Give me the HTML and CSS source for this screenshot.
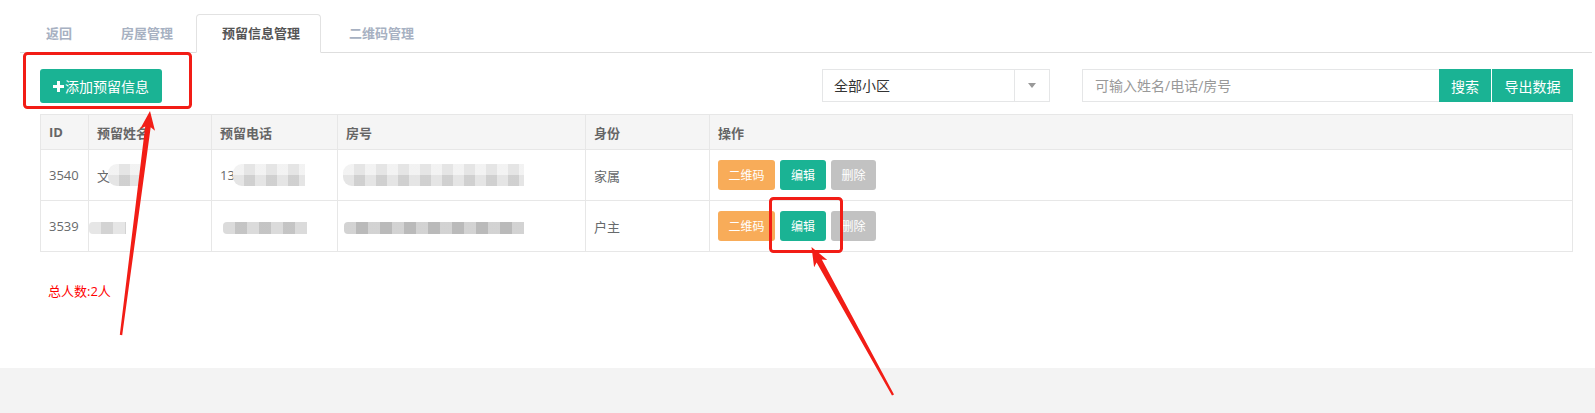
FILE: index.html
```html
<!DOCTYPE html>
<html lang="zh-CN">
<head>
    <meta charset="UTF-8">
    <title>预留信息管理</title>
    <link rel="stylesheet" href="styles.css">
</head>
<body>

<div class="page">
    <!-- tabs -->
    <ul class="tabs">
        <li><a href="#">返回</a></li>
        <li><a href="#">房屋管理</a></li>
        <li class="active"><a href="#">预留信息管理</a></li>
        <li><a href="#">二维码管理</a></li>
    </ul>

    <div class="panel">
        <div class="toolbar">
            <button class="btn btn-add" type="button">
                <svg class="plus" width="11" height="11" viewBox="0 0 11 11"><path d="M4 0h3v4h4v3H7v4H4V7H0V4h4z" fill="#fff"/></svg>添加预留信息
            </button>
            <div class="filters">
                <div class="select">
                    <span class="select-text">全部小区</span>
                    <span class="select-arrow"><i></i></span>
                </div>
                <div class="search">
                    <input type="text" placeholder="可输入姓名/电话/房号">
                    <button class="btn btn-search" type="button">搜索</button>
                    <button class="btn btn-export" type="button">导出数据</button>
                </div>
            </div>
        </div>

        <table class="grid">
            <thead>
                <tr>
                    <th class="c-id">ID</th>
                    <th class="c-name">预留姓名</th>
                    <th class="c-phone">预留电话</th>
                    <th class="c-room">房号</th>
                    <th class="c-role">身份</th>
                    <th>操作</th>
                </tr>
            </thead>
            <tbody>
                <tr>
                    <td>3540</td>
                    <td><span class="cut">文</span><span class="blur blur-name"></span></td>
                    <td><span class="cut">13</span><span class="blur blur-phone"></span></td>
                    <td><span class="blur blur-room"></span></td>
                    <td>家属</td>
                    <td class="ops">
                        <button class="btn btn-sm btn-qr" type="button">二维码</button>
                        <button class="btn btn-sm btn-edit" type="button">编辑</button>
                        <button class="btn btn-sm btn-del" type="button">删除</button>
                    </td>
                </tr>
                <tr>
                    <td>3539</td>
                    <td><span class="blur blur-thin blur-name2"></span></td>
                    <td><span class="blur blur-thin blur-phone2"></span></td>
                    <td><span class="blur blur-thin blur-room2"></span></td>
                    <td>户主</td>
                    <td class="ops">
                        <button class="btn btn-sm btn-qr" type="button">二维码</button>
                        <button class="btn btn-sm btn-edit" type="button">编辑</button>
                        <button class="btn btn-sm btn-del" type="button">删除</button>
                    </td>
                </tr>
            </tbody>
        </table>

        <p class="total">总人数:2人</p>
    </div>
</div>

<!-- screenshot annotations -->
<svg class="marks" width="1595" height="413" viewBox="0 0 1595 413">
    <rect x="24.5" y="53.5" width="166" height="54" rx="3" fill="none" stroke="#f21d16" stroke-width="3"/>
    <rect x="770.5" y="198.5" width="71" height="53" rx="3" fill="none" stroke="#f21d16" stroke-width="3"/>
    <polygon fill="#f21d16" points="119.8,334.8 145.2,126.5 140.1,128.9 150,111 155.0,130.8 150.7,127.3 122.2,335.2"/>
    <polygon fill="#f21d16" points="892.0,395.6 816.6,262.5 814.1,267.2 811.5,247 827.3,260.0 821.8,259.6 894.0,394.4"/>
</svg>

</body>
</html>
```

FILE: styles.css
```css
body {
    margin: 0;
    background: #f3f3f3;
    font-family: "Open Sans", "Noto Sans CJK SC", sans-serif;
    font-size: 13px;
    color: #676a6c;
}

.page {
    background: #fff;
    height: 368px;
    padding-top: 14px;
    box-sizing: border-box;
}

/* tabs */
.tabs {
    list-style: none;
    margin: 0 3px 0 20px;
    padding: 0;
    display: flex;
    border-bottom: 1px solid #dedede;
}

.tabs li {
    margin-bottom: -1px;
}

.tabs a {
    display: block;
    padding: 10px 20px 10px 25px;
    margin-right: 2px;
    line-height: 17px;
    font-size: 13px;
    font-weight: 600;
    color: #a7b1c2;
    text-decoration: none;
    border: 1px solid transparent;
    border-radius: 4px 4px 0 0;
}

.tabs .active a {
    color: #555;
    background: #fff;
    border-color: #e2e2e2 #e2e2e2 #fff;
}

/* panel */
.panel {
    padding: 16px 22px 0 40px;
}

.toolbar {
    display: flex;
    justify-content: space-between;
    align-items: flex-start;
}

.btn {
    border: none;
    color: #fff;
    font-family: inherit;
    font-size: 14px;
    cursor: pointer;
    padding: 0;
}

.btn-add {
    height: 34px;
    padding: 0 13px;
    background: #1ab394;
    border-radius: 3px;
    display: flex;
    align-items: center;
}

.btn-add .plus {
    margin-right: 1px;
}

.filters {
    display: flex;
    gap: 32px;
}

.select {
    width: 228px;
    height: 33px;
    border: 1px solid #e5e6e7;
    box-sizing: border-box;
    display: flex;
}

.select-text {
    flex: 1;
    padding-left: 11px;
    line-height: 31px;
    font-size: 14px;
    color: #333;
}

.select-arrow {
    width: 34px;
    border-left: 1px solid #e5e6e7;
    display: flex;
    align-items: center;
    justify-content: center;
}

.select-arrow i {
    width: 0;
    height: 0;
    border-left: 4px solid transparent;
    border-right: 4px solid transparent;
    border-top: 5px solid #999;
}

.search {
    display: flex;
    height: 33px;
}

.search input {
    width: 357px;
    height: 33px;
    box-sizing: border-box;
    border: 1px solid #e5e6e7;
    border-right: none;
    padding: 0 12px;
    font-family: inherit;
    font-size: 14px;
    outline: none;
}

.search input::placeholder {
    color: #999;
}

.btn-search {
    width: 52px;
    background: #1ab394;
}

.btn-export {
    width: 81px;
    margin-left: 1px;
    background: #1ab394;
}

/* table */
.grid {
    width: 100%;
    margin-top: 11px;
    border-collapse: collapse;
    table-layout: fixed;
}

.grid th,
.grid td {
    border: 1px solid #e7e7e7;
    text-align: left;
    padding: 0 8px;
    white-space: nowrap;
    overflow: hidden;
}

.grid th {
    height: 34px;
    background: #f5f5f5;
    font-weight: bold;
    color: #666;
}

.grid td {
    height: 50px;
    color: #676a6c;
}

.c-id { width: 31px; }
.c-name { width: 106px; }
.c-phone { width: 109px; }
.c-room { width: 231px; }
.c-role { width: 107px; }

.cut {
    vertical-align: middle;
}

.blur {
    display: inline-block;
    vertical-align: middle;
    height: 22px;
    border-radius: 9px 0 0 9px;
    background:
        repeating-linear-gradient(90deg, rgba(255, 255, 255, 0.35) 0 11px, rgba(0, 0, 0, 0.03) 11px 22px),
        linear-gradient(#ececec 50%, #d7d7d7 50%);
}

.blur-thin {
    height: 12px;
    border-radius: 4px 0 0 4px;
    background:
        repeating-linear-gradient(90deg, rgba(255, 255, 255, 0.25) 0 12px, rgba(0, 0, 0, 0.05) 12px 24px),
        #cfcfcf;
}

.blur-name { width: 32px; margin-left: -2px; }
.blur-phone { width: 72px; margin-left: -2px; }
.blur-room { width: 181px; margin-left: -3px; }
.blur-name2 { width: 37px; margin-left: -8px; background-color: #dedede; }
.blur-phone2 { width: 84px; margin-left: 3px; }
.blur-room2 { width: 180px; margin-left: -2px; background-color: #c4c4c4; }

.ops {
    font-size: 0;
}

.btn-sm {
    height: 30px;
    font-size: 12px;
    border-radius: 3px;
    margin-right: 5px;
    vertical-align: middle;
}

.btn-qr { width: 57px; background: #f8ac59; }
.btn-edit { width: 46px; background: #1ab394; }
.btn-del { width: 45px; background: #c2c2c2; }

.total {
    margin: 30px 0 0 8px;
    font-size: 13px;
    line-height: 18px;
    color: #f00;
}

/* annotations drawn on top of the screenshot */
.marks {
    position: fixed;
    top: 0;
    left: 0;
    overflow: visible;
    pointer-events: none;
}
```
